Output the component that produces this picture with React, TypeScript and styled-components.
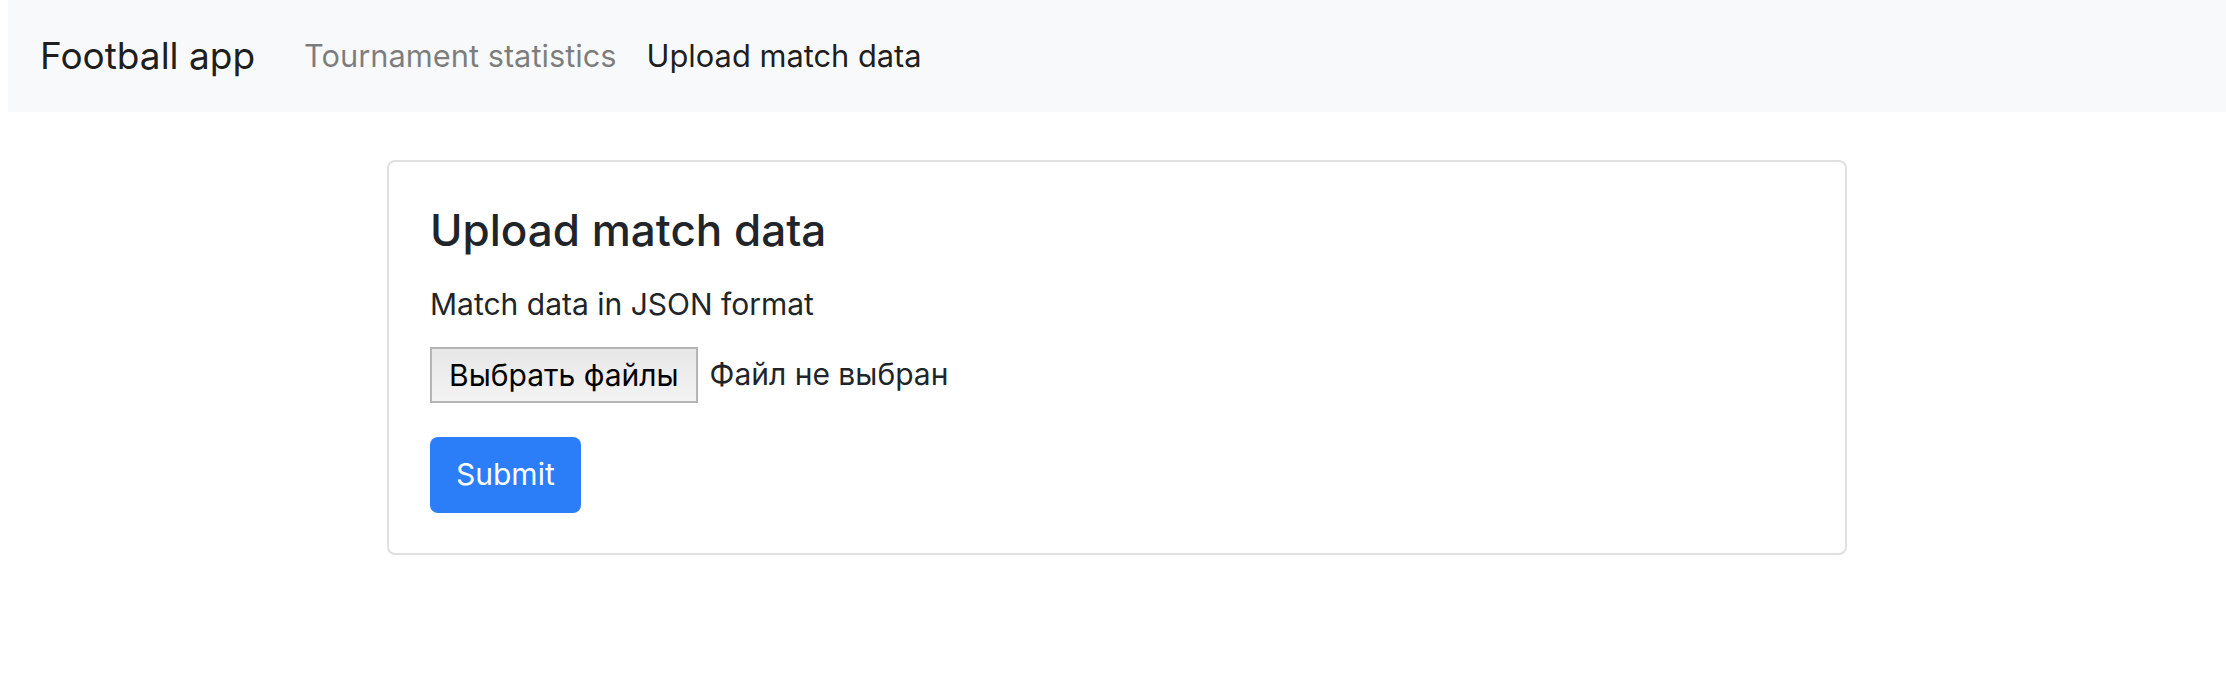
import styled, { createGlobalStyle } from "styled-components"

const GlobalStyle = createGlobalStyle`
  body {
    margin: 0;
    background: #fff;
    font-family: Inter, "Noto Sans", sans-serif;
    color: #212529;
  }
  * {
    box-sizing: border-box;
  }
`

const Page = styled.div`
  padding-left: 8px;
`

const Navbar = styled.nav`
  display: flex;
  align-items: center;
  height: 112px;
  padding-left: 32px;
  background-color: #f8f9fa;
`

const Brand = styled.a`
  font-size: 37px;
  line-height: 1.5;
  color: rgba(0, 0, 0, 0.9);
  margin-right: 34px;
  text-decoration: none;
`

const NavLink = styled.a<{ active?: boolean }>`
  font-size: 30.8px;
  line-height: 1.5;
  padding: 0 15px;
  text-decoration: none;
  color: ${props => (props.active ? "rgba(0, 0, 0, 0.9)" : "rgba(0, 0, 0, 0.5)")};
`

const Main = styled.main`
  display: flex;
  justify-content: center;
  padding-top: 48px;
`

const Card = styled.section`
  width: 1460px;
  border: 2px solid #e0e0e0;
  border-radius: 8px;
  padding: 42px 41px 40px;
`

const Title = styled.h4`
  margin: 0 0 25px;
  font-size: 44px;
  font-weight: 500;
  line-height: 1.2;
  color: #212529;
`

const Label = styled.label`
  display: block;
  font-size: 30px;
  line-height: 1.5;
  margin-bottom: 20px;
`

const FileRow = styled.div`
  display: flex;
  align-items: center;
  gap: 12px;
  margin-bottom: 34px;
`

const FileButton = styled.button`
  height: 56px;
  padding: 0 17px;
  font-family: Inter, "Noto Sans", sans-serif;
  font-size: 30px;
  color: #000;
  background: linear-gradient(#e7e7e7, #f3f3f3);
  border: 2px solid #b4b4b4;
  border-radius: 0;
`

const FileStatus = styled.span`
  font-size: 30px;
  line-height: 1.5;
  color: #212529;
`

const SubmitButton = styled.button`
  display: block;
  height: 76px;
  padding: 0 26px;
  font-family: Inter, "Noto Sans", sans-serif;
  font-size: 30px;
  line-height: 1.5;
  color: #fff;
  background-color: #2c7ef8;
  border: none;
  border-radius: 8px;
`

export default function App() {
  return (
    <Page>
      <GlobalStyle />
      <Navbar>
        <Brand href="#">Football app</Brand>
        <NavLink href="#">Tournament statistics</NavLink>
        <NavLink href="#" active>
          Upload match data
        </NavLink>
      </Navbar>
      <Main>
        <Card>
          <Title>Upload match data</Title>
          <form>
            <Label>Match data in JSON format</Label>
            <FileRow>
              <FileButton type="button">Выбрать файлы</FileButton>
              <FileStatus>Файл не выбран</FileStatus>
            </FileRow>
            <SubmitButton type="button">Submit</SubmitButton>
          </form>
        </Card>
      </Main>
    </Page>
  )
}
